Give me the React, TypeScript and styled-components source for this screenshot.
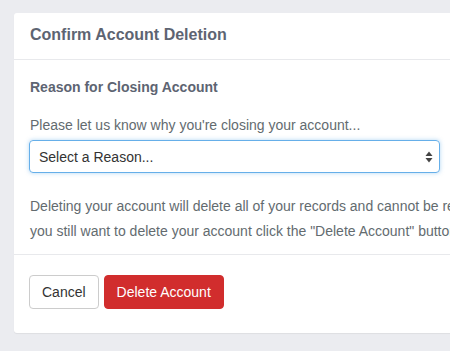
import React from "react";
import styled, { createGlobalStyle } from "styled-components";

const Global = createGlobalStyle`
  html, body { margin: 0; padding: 0; background: #ebecf0; }
  body { font-family: "Liberation Sans", Arial, Helvetica, sans-serif; -webkit-font-smoothing: antialiased; }
  #root { width: 450px; height: 351px; overflow: hidden; }
`;

const Page = styled.div`
  padding: 13px 0 0 14px;
`;

const Card = styled.div`
  width: 460px;
  background: #fff;
  border-radius: 3px 0 0 3px;
  box-shadow: 0 1px 1px rgba(0, 0, 0, 0.06);
`;

const Header = styled.div`
  height: 47px;
  box-sizing: border-box;
  padding: 0 15px 2px 16px;
  display: flex;
  align-items: center;
  border-bottom: 1px solid #e8e9ec;
  font-size: 16px;
  font-weight: bold;
  color: #5d6472;
`;

const Body = styled.div`
  padding: 19px 15px 10px 15px;
`;

const Label = styled.div`
  font-size: 14px;
  line-height: 16px;
  font-weight: bold;
  color: #5d6472;
  margin: 0 0 22px 1px;
`;

const Hint = styled.div`
  font-size: 14px;
  line-height: 16px;
  color: #636b6f;
  margin: 0 0 7px 1px;
`;

const SelectBox = styled.div`
  width: 411px;
  height: 33px;
  box-sizing: border-box;
  border: 1px solid #66afe9;
  border-radius: 4px;
  box-shadow: 0 0 4px rgba(102, 175, 233, 0.5);
  display: flex;
  align-items: center;
  justify-content: space-between;
  padding: 0 6px 0 9px;
  font-size: 14px;
  color: #333;
`;

const Para = styled.p`
  margin: 21px 0 0 1px;
  font-size: 14px;
  line-height: 25px;
  color: #636b6f;
  white-space: nowrap;
`;

const Footer = styled.div`
  border-top: 1px solid #e8e9ec;
  padding: 20px 15px 24px 15px;
  display: flex;
  gap: 5px;
`;

const Button = styled.button<{ $danger?: boolean }>`
  height: 34px;
  padding: 0 12px;
  border-radius: 4px;
  font-family: "Liberation Sans", Arial, sans-serif;
  font-size: 14px;
  border: 1px solid ${(p) => (p.$danger ? "#d12d2d" : "#cccccc")};
  background: ${(p) => (p.$danger ? "#d12d2d" : "#fff")};
  color: ${(p) => (p.$danger ? "#fff" : "#333")};
`;

const Arrows = () => (
  <svg width="8" height="12" viewBox="0 0 8 12">
    <path d="M4 0.5 L7.5 5 L0.5 5 Z" fill="#444" />
    <path d="M4 11.5 L7.5 7 L0.5 7 Z" fill="#444" />
  </svg>
);

export default function App() {
  return (
    <>
      <Global />
      <Page>
        <Card>
          <Header>Confirm Account Deletion</Header>
          <Body>
            <Label>Reason for Closing Account</Label>
            <Hint>Please let us know why you're closing your account...</Hint>
            <SelectBox>
              <span>Select a Reason...</span>
              <Arrows />
            </SelectBox>
            <Para>
              Deleting your account will delete all of your records and cannot be reversed. If
              <br />
              you still want to delete your account click the "Delete Account" button below.
            </Para>
          </Body>
          <Footer>
            <Button>Cancel</Button>
            <Button $danger>Delete Account</Button>
          </Footer>
        </Card>
      </Page>
    </>
  );
}
